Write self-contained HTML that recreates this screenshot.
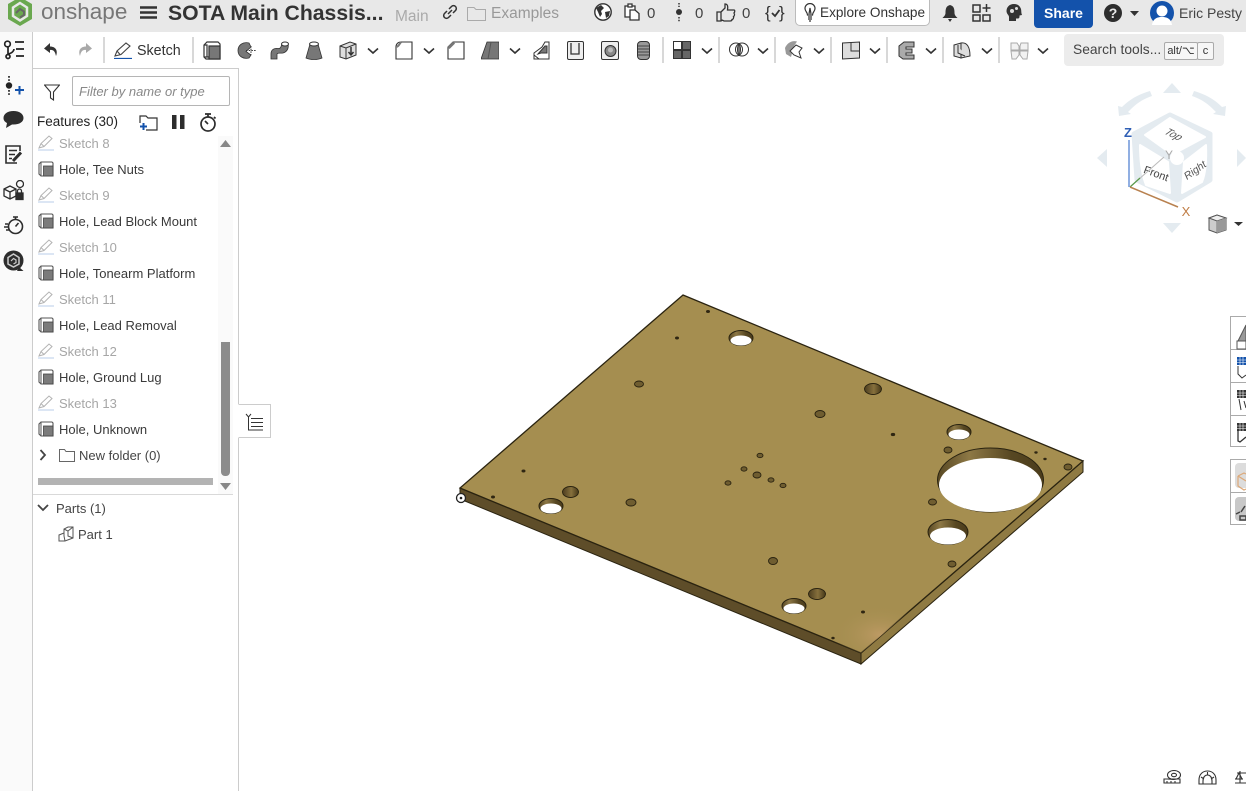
<!DOCTYPE html>
<html><head><meta charset="utf-8"><style>
html,body{margin:0;padding:0;background:#fff}
#p{position:relative;width:1246px;height:791px;overflow:hidden;background:#fff;font-family:"Liberation Sans",sans-serif;color:#333}
#p div,#p svg{position:absolute}
.t{white-space:nowrap;line-height:18px}
.f{font-size:13px;left:59px;color:#3a3a3a}
.s{color:#a6a6a6}
.d{width:2px;height:26px;top:37px;background:#d8d8d8}
</style></head><body><div id="p">
<div style="left:0;top:0;width:1246px;height:32px;background:#e8e8e8"></div>
<div style="left:0;top:32px;width:32px;height:759px;background:#fafafa"></div>
<div style="left:32px;top:32px;width:1px;height:759px;background:#ccc"></div>
<div style="left:33px;top:68px;width:205px;height:1px;background:#ccc"></div>
<div style="left:238px;top:68px;width:1px;height:723px;background:#ccc"></div>

<!-- top bar -->
<svg style="left:6px;top:0" width="28" height="28" viewBox="0 0 28 28"><path d="M14 -3L26 4V19L14 26L2 19V4Z" fill="#6aa84f"/><path d="M14 3L21 7.500V16L14 20.500L7 16V7.500Z" fill="none" stroke="#e8e8e8" stroke-width="2.500"/><path d="M10 13L14 9L18 11.500V15L14 17.500" fill="none" stroke="#666" stroke-width="2"/></svg>
<div class="t" style="left:41px;top:0px;font-size:22.500px;line-height:24px;color:#777">onshape</div>
<svg style="left:140px;top:5px" width="17" height="15"><path d="M0 2.500H17M0 7.500H17M0 12.500H17" stroke="#333" stroke-width="2.600"/></svg>
<div class="t" style="left:168px;top:2px;font-size:21.200px;line-height:24px;font-weight:bold;color:#333">SOTA Main Chassis...</div>
<div class="t" style="left:395px;top:8px;font-size:15.500px;color:#aaa">Main</div>
<svg style="left:442px;top:4px" width="16" height="16" viewBox="0 0 16 16" fill="none" stroke="#333" stroke-width="1.500"><path d="M7 5l2.500-2.500a2.500 2.500 0 0 1 4 4L11 9M9 11l-2.500 2.500a2.500 2.500 0 0 1-4-4L5 7M6 10l4-4"/></svg>
<svg style="left:467px;top:6px" width="19" height="15"><path d="M.5 14.500V1.500H7L9 3.500H18.500V14.500Z" fill="none" stroke="#aaa"/></svg>
<div class="t" style="left:491px;top:5px;font-size:15.500px;color:#999">Examples</div>
<svg style="left:594px;top:3px" width="18" height="18" viewBox="0 0 18 18"><circle cx="9" cy="9" r="8.200" fill="#fff" stroke="#333" stroke-width="1.400"/><path d="M2 5L7 2L10 5L7 8L8 11L6 14L4 9ZM11 9L16 8L15 13L12 15Z" fill="#333"/></svg>
<svg style="left:623px;top:3px" width="18" height="18" viewBox="0 0 18 18" fill="#fff" stroke="#333" stroke-width="1.300"><path d="M2 3H12V14H2Z"/><path d="M5 1H9V4H5Z"/><path d="M7 7H12L16 10.500V17H7Z"/></svg>
<div class="t" style="left:647px;top:5px;font-size:15px;color:#444">0</div>
<svg style="left:676px;top:3px" width="6" height="20"><path d="M3 0V4M3 14V19" stroke="#333" stroke-width="1.500" stroke-dasharray="1.500 1.200"/><circle cx="3" cy="9" r="3" fill="#333"/></svg>
<div class="t" style="left:695px;top:5px;font-size:15px;color:#444">0</div>
<svg style="left:716px;top:3px" width="20" height="19" viewBox="0 0 20 19" fill="none" stroke="#333" stroke-width="1.300"><path d="M1 9H5V18H1ZM5 9L9 5V1C12 1 12 4 11.500 7H18C19 7 19 9 18 10C19 11 18.500 13 17.500 13.500C18 15 17 16.500 16 16.500C16 18 15 18 14 18H8L5 16.500"/></svg>
<div class="t" style="left:742px;top:5px;font-size:15px;color:#444">0</div>
<svg style="left:765px;top:3px" width="21" height="20"><text x="0" y="15" font-family="Liberation Sans" font-size="17" fill="#333">{</text><text x="14" y="15" font-family="Liberation Sans" font-size="17" fill="#333">}</text><path d="M7 10L10 13L14.500 7" fill="none" stroke="#333" stroke-width="1.800"/></svg>
<div style="left:795px;top:-1px;width:133px;height:25px;background:#fff;border:1px solid #bbb;border-radius:0 0 5px 5px"></div>
<svg style="left:804px;top:3px" width="12" height="19" viewBox="0 0 12 19" fill="none" stroke="#333" stroke-width="1.200"><path d="M3.500 12C3.500 9 1 8.500 1 5.500A5 5 0 0 1 11 5.500C11 8.500 8.500 9 8.500 12ZM4 14H8M4 16H8M5 18H7M5 11L6 5L7 11"/></svg>
<div class="t" style="left:820px;top:4px;font-size:13.600px;color:#333">Explore Onshape</div>
<svg style="left:941px;top:4px" width="18" height="18"><path d="M9 1C5 2 4.500 5 4.500 9C4.500 11 3 12.500 1.500 14H16.500C15 12.500 13.500 11 13.500 9C13.500 5 13 2 9 1ZM7 15H11L9 18Z" fill="#333"/></svg>
<svg style="left:972px;top:4px" width="19" height="18" fill="none" stroke="#333" stroke-width="1.500"><path d="M1 1H8V8H1ZM1 11H8V17H1ZM11 11H18V17H11ZM14.500 0V8M10.500 4H18.500"/></svg>
<svg style="left:1006px;top:3px" width="17" height="19" viewBox="0 0 17 19"><path d="M8 1C3 1 .5 4.500 .5 8C.5 11 3 12 3 14V18H10V15.500H12C13.500 15.500 13.500 14 13.500 12.500L16 12C15 10 15.500 8 15 6C14 3 12 1 8 1Z" fill="#333"/><circle cx="6" cy="8" r="2" fill="#ddd"/><circle cx="10.500" cy="5.500" r="1.500" fill="#ddd"/></svg>
<div style="left:1034px;top:-2px;width:59px;height:30px;background:#1352ab;border-radius:0 0 4px 4px"></div>
<div class="t" style="left:1034px;top:4px;width:59px;text-align:center;font-size:14px;font-weight:bold;color:#fff">Share</div>
<svg style="left:1104px;top:4px" width="18" height="18"><circle cx="9" cy="9" r="9" fill="#2d2d2d"/><text x="9" y="14" text-anchor="middle" font-family="Liberation Sans" font-weight="bold" font-size="14" fill="#e8e8e8">?</text></svg>
<svg style="left:1130px;top:11px" width="9" height="5"><path d="M0 0H9L4.500 5Z" fill="#333"/></svg>
<svg style="left:1150px;top:1px" width="24" height="24" viewBox="0 0 24 24"><circle cx="12" cy="12" r="12" fill="#1352ab"/><circle cx="12" cy="10" r="5.500" fill="#fff"/><path d="M2 24C3 17 8 16 12 16C16 16 21 17 22 24Z" fill="#fff"/></svg>
<div class="t" style="left:1179px;top:4px;font-size:14px;color:#444">Eric Pesty</div>

<!-- left rail -->
<svg style="left:3px;top:40px" width="22" height="21" fill="none" stroke="#222" stroke-width="1.700"><circle cx="4.500" cy="4" r="2.800"/><circle cx="5" cy="16.500" r="2"/><path d="M5 7V14C10 13 11 10 11 9M12 2H21M13 9H21M13 16H21"/></svg>
<svg style="left:5px;top:76px" width="19" height="20"><path d="M4 0V5M4 14V19" stroke="#222" stroke-width="1.700" stroke-dasharray="1.700 1.500"/><circle cx="4" cy="9.500" r="3.200" fill="#222"/><path d="M10 14H19M14.500 10V18.500" stroke="#1352ab" stroke-width="2"/></svg>
<svg style="left:3px;top:110px" width="21" height="19"><path d="M10.500 1C4.500 1 .5 4 .5 8C.5 10.500 2 12 4 13L3 18L9 14.500C16 15 20.500 12 20.500 8C20.500 4 16.500 1 10.500 1Z" fill="#2d2d2d"/></svg>
<svg style="left:5px;top:145px" width="18" height="20" fill="none" stroke="#2d2d2d" stroke-width="1.600"><path d="M12 18H1V1H15V6M4 5.500H12M4 9.500H10M4 13.500H7"/><path d="M8 16L16 7.500" stroke-width="3"/></svg>
<svg style="left:3px;top:180px" width="21" height="21" fill="none" stroke="#2d2d2d" stroke-width="1.300"><path d="M1 9L7 6L13 9V16L7 19L1 16ZM1 9L7 12L13 9M7 12V19"/><rect x="13" y="13" width="7" height="6.500" fill="#2d2d2d"/><path d="M14.500 13V11A2 2 0 0 1 18.500 11V13"/><circle cx="17" cy="4" r="3.500"/></svg>
<svg style="left:4px;top:216px" width="20" height="19" fill="none" stroke="#2d2d2d" stroke-width="1.600"><circle cx="11.500" cy="10.500" r="7"/><path d="M9 1H14M11.500 1V3.500M11.500 10.500L14.500 7M1 8H4M0 11H4M2 14H5"/></svg>
<svg style="left:3px;top:250px" width="21" height="21" viewBox="0 0 21 21"><circle cx="10.500" cy="10.500" r="10" fill="#2d2d2d"/><path d="M10.500 4L16 7.500V14L10.500 17L5 14V7.500Z" fill="none" stroke="#ccc" stroke-width="1.500"/><path d="M8 11L10.500 8.500L13 10V12.500L10.500 14" fill="none" stroke="#ccc" stroke-width="1.200"/><path d="M16 17L20.500 21H14Z" fill="#2d2d2d"/></svg>

<!-- toolbar -->
<svg style="left:43px;top:42px" width="15" height="15"><path d="M7 1L1 6.500L7 11V8C10 7.500 12 9 13 14C15 9 13 4.500 7 4.500Z" fill="#333"/></svg>
<svg style="left:78px;top:42px" width="15" height="15"><path d="M8 1L14 6.500L8 11V8C5 7.500 3 9 2 14C0 9 2 4.500 8 4.500Z" fill="#a9a9a9"/></svg>
<div class="d" style="left:103px"></div>
<svg style="left:114px;top:42px" width="19" height="17" fill="none"><path d="M1 14L3 9L12 1L16 4L7 12.500Z M3 9L6.500 13" stroke="#444" stroke-width="1.100"/><path d="M0 16.500H18" stroke="#1352ab" stroke-width="1.200"/></svg>
<div class="t" style="left:137px;top:42px;font-size:14.300px;color:#333">Sketch</div>
<div class="d" style="left:192px"></div>
<svg style="left:203px;top:41px" width="18" height="19" fill="none" stroke="#333" stroke-width="1.200"><path d="M1 4L4 1H15L17 3V18H3L1 16Z" fill="#fff"/><rect x="6" y="5" width="11" height="13" fill="#777" stroke="#333"/><path d="M1 4H4V16L1 16M4 16H6"/></svg>
<svg style="left:237px;top:41px" width="20" height="19" viewBox="0 0 20 19"><path d="M12 2C6 .5 1 4 1 9.500C1 15 6 18.500 12 17L14 14L9 10.500L14 6Z" fill="#777" stroke="#333" stroke-width=".8"/><path d="M9 9.500H19M14 5V14" stroke="#333" stroke-dasharray="1.500 1.200" fill="none"/></svg>
<svg style="left:270px;top:41px" width="20" height="19" viewBox="0 0 20 19"><path d="M1 18V13C1 8 5 7 8 7.500C11 8 11 5 12 3H18C19 7 17 11 13 12C10 12.500 8 11.500 7 13V18Z" fill="#777" stroke="#333" stroke-width=".8"/><ellipse cx="15" cy="3" rx="3.500" ry="2" fill="#fff" stroke="#333"/></svg>
<svg style="left:305px;top:41px" width="18" height="19"><path d="M5 3L1 17C5 19 13 19 17 17L13 3Z" fill="#777" stroke="#333" stroke-width=".8"/><ellipse cx="9" cy="3" rx="4.500" ry="2" fill="#fff" stroke="#333"/></svg>
<svg style="left:339px;top:41px" width="18" height="19" fill="none" stroke="#333"><path d="M1 5L11 1L17 3V14L7 18L1 16Z" fill="#ddd"/><path d="M1 5L7 7L17 3M7 7V18"/><path d="M12 6V13M9.500 11L12 14L14.500 11" stroke-width="1.500"/></svg>
<svg style="left:395px;top:41px" width="18" height="19" fill="none" stroke="#333" stroke-width="1.100"><path d="M1 18V6C1 3 3 1 6 1H17V18Z"/><path d="M1 6C3 6 4 4 6 1" stroke="#777" stroke-width="2"/></svg>
<svg style="left:447px;top:41px" width="18" height="19" fill="none" stroke="#333" stroke-width="1.100"><path d="M1 18V6L6 1H17V18Z"/><path d="M1.500 7L7 1.500" stroke="#777" stroke-width="3"/></svg>
<svg style="left:481px;top:41px" width="18" height="19"><path d="M6 1H18V18H0Z" fill="#777" stroke="#333" stroke-width=".8"/><path d="M10 1L7 18" stroke="#555"/></svg>
<svg style="left:533px;top:41px" width="18" height="19" fill="none" stroke="#333"><path d="M1 12L9 6L12 1H16V18H1Z"/><path d="M1 12V14L6 18M5 13L12 6" /><path d="M5 13L12 5L14 5V12L8 12Z" fill="#777"/></svg>
<svg style="left:567px;top:41px" width="17" height="19" fill="none" stroke="#333"><rect x=".5" y=".5" width="16" height="18" rx="1.500" fill="#eee"/><path d="M4 2V13H12V2" stroke-width="1.300"/></svg>
<svg style="left:601px;top:41px" width="18" height="19"><rect x=".5" y=".5" width="17" height="18" rx="1.500" fill="#eee" stroke="#333"/><circle cx="9.500" cy="10" r="5.500" fill="#888" stroke="#333"/><circle cx="9.500" cy="9" r="2.500" fill="#bbb"/></svg>
<svg style="left:637px;top:41px" width="13" height="19"><rect x=".5" y=".5" width="12" height="18" rx="3.500" fill="#999" stroke="#333"/><path d="M1 5H12M1 8H12M1 11H12M1 14H12" stroke="#444"/></svg>
<div class="d" style="left:662px"></div>
<svg style="left:673px;top:41px" width="18" height="18" stroke="#333"><rect x=".5" y=".5" width="8" height="8" fill="#fff"/><rect x="9.500" y=".5" width="8" height="8" fill="#666"/><rect x=".5" y="9.500" width="8" height="8" fill="#666"/><rect x="9.500" y="9.500" width="8" height="8" fill="#666"/></svg>
<div class="d" style="left:718px"></div>
<svg style="left:729px;top:42px" width="20" height="15" fill="none" stroke="#333"><circle cx="7" cy="7.500" r="6.500"/><circle cx="13" cy="7.500" r="6.500"/><path d="M10 2C12 5 12 10 10 13C8 10 8 5 10 2Z" fill="#777"/></svg>
<div class="d" style="left:774px"></div>
<svg style="left:784px;top:40px" width="20" height="20"><path d="M1 8C3 3 8 0 13 1.500L10 6L7 17L2 14Z" fill="#999"/><path d="M6 11L12 5L18 8L15 12L17 18L10 15Z" fill="#fff" stroke="#333"/></svg>
<div class="d" style="left:830px"></div>
<svg style="left:842px;top:41px" width="18" height="19"><path d="M.5 2L17.500 1V17L.5 18Z" fill="#ddd" stroke="#333"/><path d="M9 1V10H17" fill="none" stroke="#333"/></svg>
<div class="d" style="left:886px"></div>
<svg style="left:898px;top:41px" width="17" height="19"><path d="M1 5L6 1H16V6H8V8H14V12H8V14H16V18H5L1 15Z" fill="#aaa" stroke="#333"/></svg>
<div class="d" style="left:942px"></div>
<svg style="left:953px;top:41px" width="18" height="19" fill="#ddd" stroke="#333"><path d="M1 4L8 2V17L1 15Z"/><path d="M8 2C14 1 17 6 17 15L8 17Z"/><path d="M5 4V12L12 15"/></svg>
<div class="d" style="left:998px"></div>
<svg style="left:1010px;top:41px" width="19" height="19" fill="#f2f2f2" stroke="#aaa"><path d="M1 2H7L9 5V9L1 9ZM18 2H11L10 5V9H18ZM1 10H9V14L6 18H2ZM18 10H10V14L13 18H17Z"/></svg>
<svg style="left:0;top:0;width:1246px;height:70px" fill="none" stroke="#333" stroke-width="1.600"><path id="c" d="M368 48.500L373 53L378 48.500M424 48.500L429 53L434 48.500M510 48.500L515 53L520 48.500M702 48.500L707 53L712 48.500M758 48.500L763 53L768 48.500M814 48.500L819 53L824 48.500M870 48.500L875 53L880 48.500M926 48.500L931 53L936 48.500M982 48.500L987 53L992 48.500M1038 48.500L1043 53L1048 48.500"/></svg>
<div style="left:1064px;top:34px;width:160px;height:32px;background:#ececec;border-radius:4px"></div>
<div class="t" style="left:1073px;top:41px;font-size:13.800px;color:#444">Search tools...</div>
<div class="t" style="left:1164px;top:42px;width:32px;height:16px;border:1px solid #aaa;background:#f6f6f6;border-radius:2px;font-size:11px;line-height:16px;text-align:center;color:#333">alt/⌥</div>
<div class="t" style="left:1197px;top:42px;width:15px;height:16px;border:1px solid #aaa;background:#f6f6f6;border-radius:2px;font-size:11px;line-height:16px;text-align:center;color:#333">c</div>

<!-- panel -->
<svg style="left:44px;top:84px" width="16" height="17" fill="none" stroke="#333" stroke-width="1.100"><path d="M.5 1H15.500L9.500 8V16L6.500 14V8Z"/></svg>
<div style="left:72px;top:76px;width:156px;height:28px;border:1px solid #b5b5b5;border-radius:2px"></div>
<div class="t" style="left:79px;top:83px;font-size:13px;font-style:italic;color:#888">Filter by name or type</div>
<div class="t" style="left:37px;top:113px;font-size:13.500px;color:#222">Features (30)</div>
<svg style="left:139px;top:115px" width="19" height="16" fill="none"><path d="M1 8V1H7L9 3H18V15H7" stroke="#333" stroke-width="1.200"/><path d="M1 11.500H8M4.500 8V15" stroke="#1352ab" stroke-width="2"/></svg>
<svg style="left:172px;top:115px" width="13" height="14" fill="#2d2d2d"><rect width="4.500" height="14"/><rect x="8" width="4.500" height="14"/></svg>
<svg style="left:199px;top:113px" width="18" height="19" fill="none" stroke="#2d2d2d" stroke-width="1.700"><circle cx="9" cy="11" r="7"/><path d="M6 1H12M9 1V4M9 11L6 8M15 4L16.500 5.500"/></svg>

<svg width="0" height="0" style="left:0;top:0"><defs>
<g id="sk" fill="none"><path d="M1 13L3 8.500L11 1L14 3.500L6 11.500Z M3 8.500L6 11.500" stroke="#b3b3b3"/><path d="M0 15H16" stroke="#b9cde8"/></g>
<g id="ho"><path d="M1 3L3 1H14L15 2V15H3L1 13Z" fill="#fff" stroke="#555" stroke-width="1.100"/><rect x="5.500" y="5" width="9.500" height="10" fill="#7b7b7b" stroke="#444" stroke-width=".8"/><path d="M3 1V15" stroke="#555"/></g>
</defs></svg>
<svg style="left:38px;top:135px" width="17" height="16"><use href="#sk"/></svg>
<svg style="left:38px;top:161px" width="17" height="16"><use href="#ho"/></svg>
<svg style="left:38px;top:187px" width="17" height="16"><use href="#sk"/></svg>
<svg style="left:38px;top:213px" width="17" height="16"><use href="#ho"/></svg>
<svg style="left:38px;top:239px" width="17" height="16"><use href="#sk"/></svg>
<svg style="left:38px;top:265px" width="17" height="16"><use href="#ho"/></svg>
<svg style="left:38px;top:291px" width="17" height="16"><use href="#sk"/></svg>
<svg style="left:38px;top:317px" width="17" height="16"><use href="#ho"/></svg>
<svg style="left:38px;top:343px" width="17" height="16"><use href="#sk"/></svg>
<svg style="left:38px;top:369px" width="17" height="16"><use href="#ho"/></svg>
<svg style="left:38px;top:395px" width="17" height="16"><use href="#sk"/></svg>
<svg style="left:38px;top:421px" width="17" height="16"><use href="#ho"/></svg>
<div class="t f s" style="top:135px">Sketch 8</div>
<div class="t f" style="top:161px">Hole, Tee Nuts</div>
<div class="t f s" style="top:187px">Sketch 9</div>
<div class="t f" style="top:213px">Hole, Lead Block Mount</div>
<div class="t f s" style="top:239px">Sketch 10</div>
<div class="t f" style="top:265px">Hole, Tonearm Platform</div>
<div class="t f s" style="top:291px">Sketch 11</div>
<div class="t f" style="top:317px">Hole, Lead Removal</div>
<div class="t f s" style="top:343px">Sketch 12</div>
<div class="t f" style="top:369px">Hole, Ground Lug</div>
<div class="t f s" style="top:395px">Sketch 13</div>
<div class="t f" style="top:421px">Hole, Unknown</div>
<svg style="left:39px;top:449px" width="8" height="12" fill="none" stroke="#444" stroke-width="1.800"><path d="M1.500 1L6 6L1.500 11"/></svg>
<svg style="left:59px;top:448px" width="16" height="14" fill="none" stroke="#666"><path d="M.5 13.500V1.500H5.500L7 3.500H15.500V13.500Z"/></svg>
<div class="t" style="left:79px;top:447px;font-size:13px;color:#444">New folder (0)</div>
<div style="left:218px;top:136px;width:15px;height:359px;background:#fafafa"></div>
<svg style="left:220px;top:140px" width="11" height="7"><path d="M0 7L5.500 0L11 7Z" fill="#888"/></svg>
<div style="left:221px;top:342px;width:9px;height:134px;background:#8c8c8c;border-radius:0 0 4px 4px"></div>
<svg style="left:220px;top:483px" width="11" height="7"><path d="M0 0L5.500 7L11 0Z" fill="#888"/></svg>
<div style="left:38px;top:478px;width:175px;height:7px;background:#b3b3b3"></div>
<div style="left:33px;top:494px;width:200px;height:1px;background:#d9d9d9"></div>
<svg style="left:37px;top:504px" width="12" height="8" fill="none" stroke="#444" stroke-width="1.800"><path d="M1 1L6 6L11 1"/></svg>
<div class="t" style="left:56px;top:500px;font-size:13px;color:#444">Parts (1)</div>
<svg style="left:58px;top:526px" width="16" height="16" fill="#fff" stroke="#555"><path d="M1 9L6 7V3L10 1H15V12L7 15H1Z"/><path d="M6 7V10L7 15M6 3L10 5V10L15 12M10 5L15 1" fill="none"/></svg>
<div class="t" style="left:78px;top:526px;font-size:13px;color:#444">Part 1</div>

<div style="left:238px;top:404px;width:31px;height:32px;border:1px solid #ccc;border-left:1px solid #fff;background:#fff"></div>
<svg style="left:245px;top:413px" width="18" height="18" fill="none" stroke="#333"><path d="M1 1L3.500 4L6 1M3.500 4V17M6 5.500H18M6 9.500H18M6 13.500H18M3 17H18"/></svg>

<!-- model -->
<svg style="left:0;top:0" width="1246" height="791" viewBox="0 0 1246 791">
<defs>
<radialGradient id="w" cx=".5" cy=".5" r=".5"><stop offset="0" stop-color="#bd9a64"/><stop offset="1" stop-color="#a58e50" stop-opacity="0"/></radialGradient>
<linearGradient id="h" x1="0" x2="1" y1="0" y2="0"><stop offset="0" stop-color="#4c3d20"/><stop offset=".55" stop-color="#86703c"/><stop offset="1" stop-color="#463819"/></linearGradient>
<linearGradient id="b" x1="0" x2="1" y1="0" y2="0"><stop offset="0" stop-color="#584824"/><stop offset=".3" stop-color="#8d7845"/><stop offset=".7" stop-color="#574722"/><stop offset="1" stop-color="#4b3c1c"/></linearGradient>
<clipPath id="pc"><path d="M683 295L1083 461L861 653L460 488Z"/></clipPath>
</defs>
<path d="M460 488L861 653V664L460 499Z" fill="#5e4d29" stroke="#2a2310" stroke-width="1"/>
<path d="M861 653L1083 461V472L861 664Z" fill="#8f7a42" stroke="#2a2310" stroke-width="1"/>
<path d="M683 295L1083 461L861 653L460 488Z" fill="#a58e50" stroke="#2a2310" stroke-width="1.300"/>
<ellipse cx="880" cy="635" rx="48" ry="30" fill="url(#w)" clip-path="url(#pc)"/>
<g stroke="#2a2310" stroke-width="1">
<ellipse cx="741" cy="338" rx="12" ry="7.500" fill="url(#b)"/>
<ellipse cx="551" cy="506" rx="12" ry="7.500" fill="url(#b)"/>
<ellipse cx="959" cy="432" rx="12" ry="7.500" fill="url(#b)"/>
<ellipse cx="794" cy="606" rx="12" ry="7.500" fill="url(#b)"/>
<ellipse cx="948" cy="532" rx="20" ry="12.500" fill="url(#b)"/>
<ellipse cx="990.500" cy="480" rx="53" ry="32" fill="url(#b)"/>
</g>
<g fill="#fff">
<ellipse cx="741" cy="340.500" rx="10.500" ry="5"/>
<ellipse cx="551" cy="508.500" rx="10.500" ry="5"/>
<ellipse cx="959" cy="434.500" rx="10.500" ry="5"/>
<ellipse cx="794" cy="608.500" rx="10.500" ry="5"/>
<ellipse cx="948" cy="536" rx="18" ry="8.500"/>
<ellipse cx="990.500" cy="485" rx="51.500" ry="27"/>
</g>
<g stroke="#2a2310" stroke-width=".9" fill="url(#h)">
<ellipse cx="570.500" cy="492" rx="8" ry="5.500"/><ellipse cx="873" cy="389" rx="8.500" ry="5.500"/><ellipse cx="817" cy="594" rx="8.500" ry="5.500"/>
</g>
<g stroke="#2a2310" stroke-width=".9" fill="#6f5d30">
<ellipse cx="639" cy="384" rx="4.500" ry="3"/><ellipse cx="631" cy="502.500" rx="5" ry="3.500"/><ellipse cx="820" cy="414" rx="5" ry="3.500"/><ellipse cx="948" cy="450" rx="4" ry="3"/><ellipse cx="932.500" cy="502" rx="4" ry="3"/><ellipse cx="1068" cy="467" rx="4" ry="3"/><ellipse cx="952" cy="564" rx="4" ry="3"/><ellipse cx="773" cy="561" rx="4.500" ry="3.500"/><ellipse cx="760" cy="455.500" rx="3" ry="2.200"/><ellipse cx="744" cy="469" rx="3" ry="2.200"/><ellipse cx="757" cy="475" rx="4" ry="3"/><ellipse cx="771" cy="480" rx="3" ry="2.200"/><ellipse cx="783" cy="485.500" rx="3" ry="2.200"/><ellipse cx="728" cy="483" rx="3" ry="2.200"/>
</g>
<g fill="#2f2612">
<ellipse cx="708" cy="311.500" rx="2" ry="1.500"/><ellipse cx="677" cy="338" rx="2" ry="1.500"/><ellipse cx="523.500" cy="471" rx="2" ry="1.500"/><ellipse cx="493" cy="497" rx="2" ry="1.500"/><ellipse cx="893" cy="434.500" rx="2.200" ry="1.600"/><ellipse cx="1036" cy="452.500" rx="1.700" ry="1.200"/><ellipse cx="1045" cy="459" rx="1.700" ry="1.200"/><ellipse cx="863" cy="612" rx="2" ry="1.500"/><ellipse cx="833" cy="638" rx="1.700" ry="1.300"/>
</g>
<circle cx="461" cy="498" r="4.500" fill="#fff" stroke="#222" stroke-width="1.300"/><circle cx="461" cy="498" r="1.300" fill="#222"/>
</svg>

<!-- view cube -->
<svg style="left:1090px;top:80px" width="156" height="160" viewBox="0 0 156 160">
<g fill="#e4ebf0">
<path d="M82 3L91 13H73Z"/><path d="M82 153L91 143H73Z"/><path d="M7 78L17 69V87Z"/><path d="M156 78L147 69V87Z"/>
<path d="M29 36L28 26L32 27C38 21 46 15 60 11L62 16C50 20 44 26 38 32L41 34Z"/>
<path d="M135 36L136 26L132 27C126 21 118 15 104 11L102 16C114 20 120 26 126 32L123 34Z"/>
</g>
<path d="M80 35L120 54V100L87 120L47 100L44 54Z" fill="#e4ebf0" stroke="#e4ebf0" stroke-width="5" stroke-linejoin="round"/>
<path d="M80 38L115 57L87 72Q83 70 80 73L55 55Z" fill="#fff" stroke="#fff" stroke-linejoin="round" stroke-width="2"/>
<path d="M50 65L78 82L80 113L56 105Q50 90 50 65Z" fill="#fff" stroke="#fff" stroke-linejoin="round" stroke-width="2"/>
<path d="M116 65L94 82L92 113L112 102Q117 90 116 65Z" fill="#fff" stroke="#fff" stroke-linejoin="round" stroke-width="2"/>
<circle cx="87" cy="78" r="7" fill="#fff"/>
<text transform="translate(81 57) rotate(26) skewX(-20)" text-anchor="middle" font-size="10.500" font-style="italic" fill="#555" font-family="Liberation Sans">Top</text>
<text transform="translate(65 97) rotate(20)" text-anchor="middle" font-size="11" fill="#444" font-family="Liberation Sans">Front</text>
<text transform="translate(107 93) rotate(-35)" text-anchor="middle" font-size="10.500" font-style="italic" fill="#555" font-family="Liberation Sans">Right</text>
<path d="M40 107L74 77" stroke="#bbb" stroke-width="1"/><path d="M40 107L50 98" stroke="#5a9a4a" stroke-width="1.200"/>
<path d="M39 107V60" stroke="#6c94d8" stroke-width="1.500"/>
<path d="M40 107L88 127" stroke="#b8814f" stroke-width="1.500"/>
<text x="38" y="57" text-anchor="middle" font-size="13" font-weight="bold" fill="#2f5fb5" font-family="Liberation Sans">Z</text>
<text x="96" y="136" text-anchor="middle" font-size="13" fill="#c07d45" font-family="Liberation Sans">X</text>
<text x="79" y="79" text-anchor="middle" font-size="12" fill="#aaa" font-family="Liberation Sans">Y</text>
<path d="M119 138L127 135L136 138V150L127 153L119 150Z" fill="#ccc" stroke="#555"/><path d="M119 138L127 141L136 138L127 135Z" fill="#eee" stroke="#555"/><path d="M127 141V153" stroke="#777"/><path d="M127 141V153L136 150V138Z" fill="#999"/>
<path d="M144 142H153L148.500 146Z" fill="#333"/>
</svg>

<!-- right panel -->
<div style="left:1230px;top:316px;width:16px;height:131px;border:1px solid #aaa;border-right:0;background:#fff;box-sizing:border-box"></div>
<div style="left:1230px;top:349px;width:16px;height:1px;background:#aaa"></div>
<div style="left:1230px;top:382px;width:16px;height:1px;background:#aaa"></div>
<div style="left:1230px;top:415px;width:16px;height:1px;background:#aaa"></div>
<div style="left:1230px;top:459px;width:16px;height:66px;border:1px solid #aaa;border-right:0;background:#fff;box-sizing:border-box"></div>
<div style="left:1230px;top:492px;width:16px;height:1px;background:#aaa"></div>
<div style="left:1235px;top:463px;width:11px;height:25px;background:#dcdcdc;border-radius:4px 0 0 4px"></div>
<div style="left:1235px;top:497px;width:11px;height:24px;background:#c8c8c8;border-radius:4px 0 0 4px"></div>
<svg style="left:1230px;top:316px" width="16" height="215" fill="none">
<path d="M8 25L16 9V27H8Z" fill="#999" stroke="#555"/><rect x="7" y="25" width="9" height="8" fill="#fff" stroke="#555"/>
<rect x="7" y="41" width="9" height="8" fill="#1352ab"/><path d="M7 44H16M7 46.500H16M10 41V49M13 41V49" stroke="#fff" stroke-width=".6"/><path d="M8 50V58L12 62L16 59" stroke="#333"/>
<rect x="7" y="74" width="9" height="8" fill="#333"/><path d="M7 77H16M7 79.500H16M10 74V82M13 74V82" stroke="#fff" stroke-width=".6"/><path d="M9 83L11 94M14 85L16 92" stroke="#333"/>
<rect x="7" y="107" width="9" height="8" fill="#333"/><path d="M7 110H16M7 112.500H16M10 107V115M13 107V115" stroke="#fff" stroke-width=".6"/><path d="M8 115V125L10 126L16 121" stroke="#333" stroke-width="1.300"/>
<path d="M8 160L14 157L16 158M8 160V170L14 174L16 173M8 160L16 165" stroke="#dca878" stroke-width="1.200"/>
<path d="M6 198L10 196M11 196L15 190M10 200H16V204H10Z" stroke="#444" stroke-width="1.500"/>
</svg>

<!-- bottom right tools -->
<svg style="left:1163px;top:770px" width="83" height="15" fill="none" stroke="#333" stroke-width="1.100">
<ellipse cx="11" cy="5" rx="6.500" ry="4.500"/><ellipse cx="11" cy="5" rx="2.500" ry="1.700"/><path d="M1 9H17V13H1ZM4 11V13M8 11V13M12 11V13M4.500 9L11 9.500"/>
<path d="M36 14V10C36 4 40 1 44.500 1C49 1 53 4 53 10V14ZM40 14V11C40 7 42 5 44.500 5C47 5 49 7 49 11V14ZM38 7L41 9M51 7L48 9M44.500 2V5"/>
<path d="M74 3H83M76 3L73 9H79ZM77 1V13M72 13H83" /><path d="M72 9H80" />
</svg>
</div></body></html>
